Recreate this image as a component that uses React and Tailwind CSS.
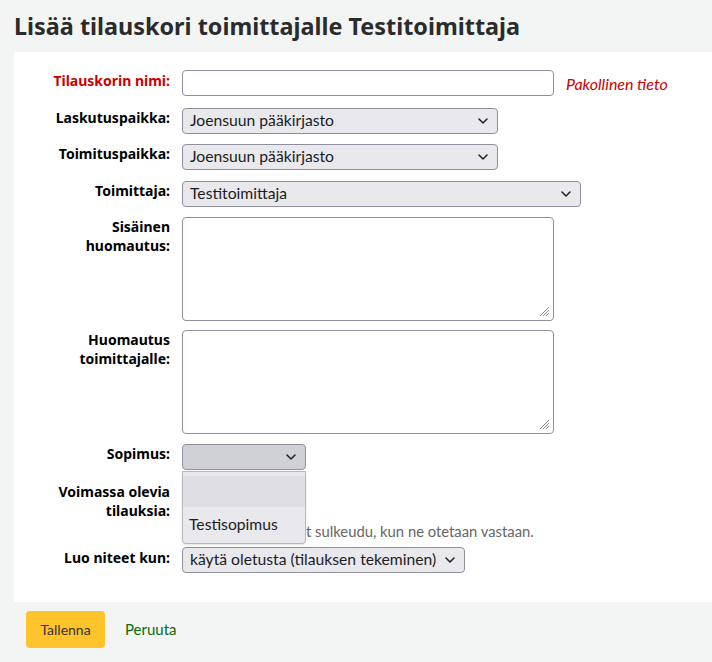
import React from "react";

const FONT = { fontFamily: "Lato, 'Liberation Sans', sans-serif" };
const HFONT = { fontFamily: "'Noto Sans', 'Liberation Sans', sans-serif" };

function Chevron() {
  return (
    <svg width="10" height="6" viewBox="0 0 10 6" className="shrink-0">
      <path d="M1 1l4 4 4-4" fill="none" stroke="#1f1f23" strokeWidth="1.5" strokeLinecap="round" strokeLinejoin="round" />
    </svg>
  );
}

function Select({ value, width, active = false }) {
  return (
    <div
      className={`flex h-[26px] items-center justify-between rounded-[4px] border border-[#8f8f9d] pl-[7px] pr-[9px] text-[15.7px] text-[#1c1b22] ${active ? "bg-[#d0d0d7]" : "bg-[#e9e9ed]"}`}
      style={{ width }}
    >
      <span className="whitespace-nowrap">{value}</span>
      <Chevron />
    </div>
  );
}

function Grip() {
  return (
    <svg width="12" height="12" viewBox="0 0 12 12" className="absolute bottom-[3px] right-[3px]">
      <path d="M11 2L2 11M11 5L5 11M11 8L8 11" stroke="#8a8a8f" strokeWidth="1" />
    </svg>
  );
}

function TextArea() {
  return <div className="relative h-[104px] w-[372px] rounded-[4px] border border-[#8f8f9d] bg-white"><Grip /></div>;
}

function Label({ children, red = false }) {
  return (
    <div
      className={`w-[168px] shrink-0 pr-[12px] text-right text-[14px] font-bold leading-[19px] ${red ? "text-[#cc0000]" : "text-black"}`}
      style={HFONT}
    >
      {children}
    </div>
  );
}

export default function App() {
  return (
    <div className="min-h-screen bg-[#f3f4f4]" style={FONT}>
      <h1 className="px-[14px] pt-[12px] pb-[11px] text-[23.4px] font-bold leading-[29px] text-[#2b2b2b]" style={HFONT}>
        Lisää tilauskori toimittajalle Testitoimittaja
      </h1>
      <div className="ml-[14px] bg-white pt-[18px] pb-[29px]">
        <div className="flex items-start">
          <div className="pt-[1px]"><Label red>Tilauskorin nimi:</Label></div>
          <div className="h-[26px] w-[372px] rounded-[4px] border border-[#8f8f9d] bg-white" />
          <span className="ml-[12px] pt-[4px] text-[16px] italic leading-[19px] text-[#cc0000]">Pakollinen tieto</span>
        </div>
        <div className="mt-[12px] flex items-start">
          <Label>Laskutuspaikka:</Label>
          <Select value="Joensuun pääkirjasto" width={316} />
        </div>
        <div className="mt-[10px] flex items-start">
          <Label>Toimituspaikka:</Label>
          <Select value="Joensuun pääkirjasto" width={316} />
        </div>
        <div className="mt-[11px] flex items-start">
          <Label>Toimittaja:</Label>
          <Select value="Testitoimittaja" width={399} />
        </div>
        <div className="mt-[10px] flex items-start">
          <Label>Sisäinen<br />huomautus:</Label>
          <TextArea />
        </div>
        <div className="mt-[9px] flex items-start">
          <Label>Huomautus<br />toimittajalle:</Label>
          <TextArea />
        </div>
        <div className="mt-[10px] flex items-start">
          <Label>Sopimus:</Label>
          <div className="relative">
            <Select value="" width={124} active />
            <div className="absolute left-0 top-[27px] z-10 w-[124px] overflow-hidden rounded-b-[4px] border border-[#b7b7bd] bg-[#e9e9ed] pt-[4px] pb-[1px] shadow-sm">
              <div className="h-[31px] bg-[#dedee4]" />
              <div className="flex h-[35px] items-center px-[6px] text-[15.7px] text-[#1c1b22]">Testisopimus</div>
            </div>
          </div>
        </div>
        <div className="mt-[12px] flex items-start">
          <Label>Voimassa olevia<br />tilauksia:</Label>
          <div className="flex flex-col">
            <input type="checkbox" className="mt-[4px] h-[13px] w-[13px]" readOnly />
            <div className="mt-[23px] flex whitespace-nowrap text-[14.8px] leading-[18px] text-[#666]">
              <span className="w-[124px] shrink-0 overflow-hidden">Kestotilaukset eivä</span>
              <span>t sulkeudu, kun ne otetaan vastaan.</span>
            </div>
          </div>
        </div>
        <div className="mt-[7px] flex items-start">
          <div className="pt-[1px]"><Label>Luo niteet kun:</Label></div>
          <Select value="käytä oletusta (tilauksen tekeminen)" width={283} />
        </div>
      </div>
      <div className="flex items-center px-[26px] pt-[9px]">
        <div className="flex h-[37px] w-[79px] items-center justify-center rounded-[4px] bg-[#ffc32b] text-[14px] text-[#333]">Tallenna</div>
        <span className="ml-[20px] text-[15px] text-[#0a6b0a]">Peruuta</span>
      </div>
    </div>
  );
}
